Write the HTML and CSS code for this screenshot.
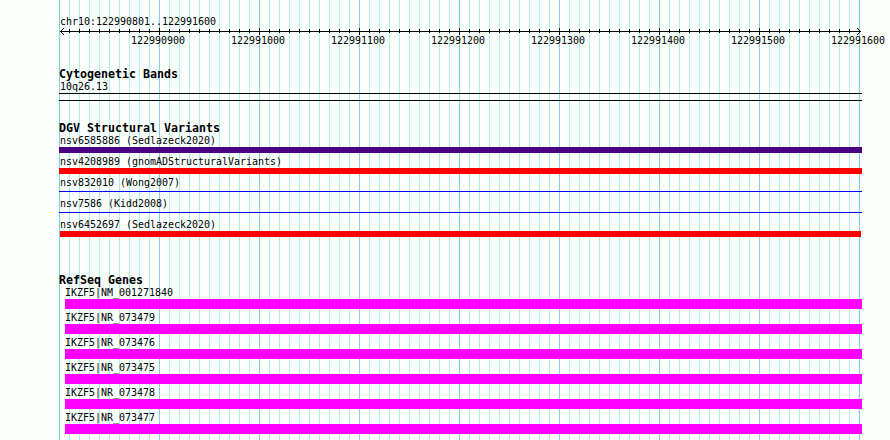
FILE: index.html
```html
<!DOCTYPE html>
<html lang="en">
<head>
<meta charset="utf-8">
<title>chr10:122990801..122991600</title>
<link rel="stylesheet" href="styles.css">
</head>
<body>
<main class="browser">
  <header class="scale">
    <div class="label">chr10:122990801..122991600</div>
    <svg class="ruler" width="803" height="7" viewBox="0 0 803 7" shape-rendering="crispEdges">
      <defs>
        <pattern id="minor" width="10" height="7" patternUnits="userSpaceOnUse"><path d="M0 1h1v4h-1z"/></pattern>
        <pattern id="major" width="100" height="7" patternUnits="userSpaceOnUse"><path d="M0 0h1v7h-1z"/></pattern>
      </defs>
      <path d="M1 3h801v1H1z"/>
      <rect x="10" width="790" height="7" fill="url(#minor)"/>
      <rect x="100" width="700" height="7" fill="url(#major)"/>
      <path d="M2 2h1v1h-1zM3 1h1v1h-1zM4 0h1v1h-1zM2 4h1v1h-1zM3 5h1v1h-1zM4 6h1v1h-1z"/>
      <path d="M800 2h1v1h-1zM799 1h1v1h-1zM798 0h1v1h-1zM800 4h1v1h-1zM799 5h1v1h-1zM798 6h1v1h-1z"/>
    </svg>
    <div class="numbers">
      <span>122990900</span><span>122991000</span><span>122991100</span><span>122991200</span><span>122991300</span><span>122991400</span><span>122991500</span><span>122991600</span>
    </div>
  </header>

  <section class="track bands">
    <h2>Cytogenetic Bands</h2>
    <div class="label">10q26.13</div>
    <div class="band"></div>
  </section>

  <section class="track variants">
    <h2>DGV Structural Variants</h2>
    <div class="feature"><div class="label">nsv6585886 (Sedlazeck2020)</div><div class="bar indigo"></div></div>
    <div class="feature"><div class="label">nsv4208989 (gnomADStructuralVariants)</div><div class="bar red"></div></div>
    <div class="feature"><div class="label">nsv832010 (Wong2007)</div><div class="bar line"></div></div>
    <div class="feature"><div class="label">nsv7586 (Kidd2008)</div><div class="bar line"></div></div>
    <div class="feature"><div class="label">nsv6452697 (Sedlazeck2020)</div><div class="bar red inset"></div></div>
  </section>

  <section class="track genes">
    <h2>RefSeq Genes</h2>
    <div class="feature"><div class="label">IKZF5|NM_001271840</div><div class="bar"></div></div>
    <div class="feature"><div class="label">IKZF5|NR_073479</div><div class="bar"></div></div>
    <div class="feature"><div class="label">IKZF5|NR_073476</div><div class="bar"></div></div>
    <div class="feature"><div class="label">IKZF5|NR_073475</div><div class="bar"></div></div>
    <div class="feature"><div class="label">IKZF5|NR_073478</div><div class="bar"></div></div>
    <div class="feature"><div class="label">IKZF5|NR_073477</div><div class="bar"></div></div>
  </section>
</main>
</body>
</html>
```

FILE: styles.css
```css
* { box-sizing: border-box; }

body {
  margin: 0;
  background: #fdfffc;
  color: #000;
  font: 9.97px/9px "DejaVu Sans Mono", monospace;
}

.browser {
  width: 890px;
  height: 440px;
  padding: 17px 0 0 59px;
  overflow: hidden;
  background-image:
    repeating-linear-gradient(to right, #87ceeb 0 1px, transparent 1px 100px),
    repeating-linear-gradient(to right, #afeeee 0 1px, transparent 1px 10px);
  background-size: 801px 100%;
  background-position: 59px 0;
  background-repeat: no-repeat;
}

.label {
  height: 11px;
  padding-left: 1px;
  white-space: pre;
}

.ruler { display: block; }

.numbers {
  display: flex;
  width: 800px;
  height: 11px;
  margin: 1px 0 0 49px;
}

.numbers span {
  width: 100px;
  flex: none;
  text-align: center;
}

.track { width: 803px; }

h2 {
  height: 14px;
  margin: 0;
  font-size: 11.63px;
  line-height: 12px;
  font-weight: bold;
}

.bands { margin-top: 21px; }

.band {
  height: 8px;
  border: solid #000;
  border-width: 1px 0;
}

.variants { margin-top: 21px; }
.variants .feature { height: 21px; }
.variants .bar { height: 6px; }

.indigo { background: #4b0082; }
.red { background: #f00; }
.inset { margin: 0 1px; }

.line {
  background: linear-gradient(#00f, #00f) 0 2px / 100% 1px no-repeat;
}

.genes { margin-top: 33px; }

.genes .feature {
  height: 25px;
  padding-left: 6px;
}

.genes .label { padding-left: 0; }

.genes .bar {
  height: 10px;
  background: #f0f;
}
```
